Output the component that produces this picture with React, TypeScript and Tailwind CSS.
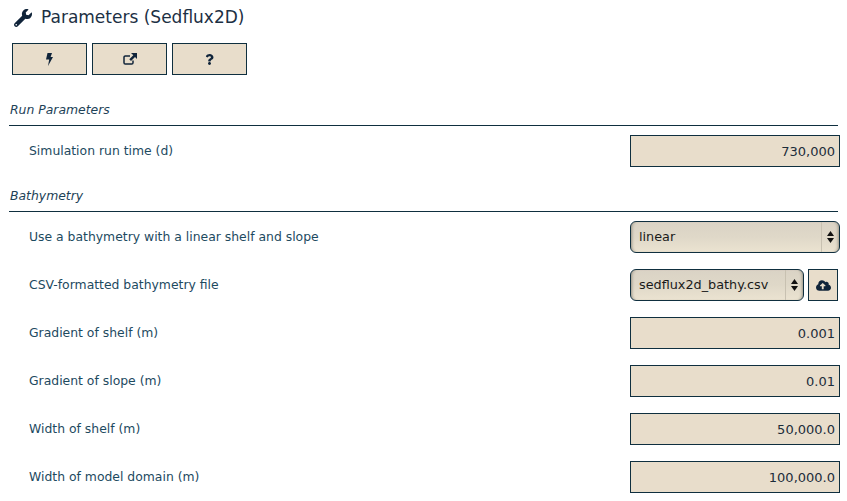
import { FaWrench, FaQuestion, FaCloudUploadAlt } from 'react-icons/fa';

const font = "[font-family:'DejaVu_Sans',sans-serif]";

function SectionHeading({ title }: { title: string }) {
  return (
    <div className="mx-[9px] mb-[9px] flex h-[31px] items-center border-b border-[#0f2f3f] pt-[1px] pl-px">
      <h2 className="text-[12.4px] italic text-[#1d4257]">{title}</h2>
    </div>
  );
}

function Row({ label, children }: { label: string; children: React.ReactNode }) {
  return (
    <div className="flex h-8 items-center justify-between pr-[7px] pl-[29px]">
      <label className="text-[12.4px] text-[#1d4a5f]">{label}</label>
      <div className="flex w-[210px] gap-[4px]">{children}</div>
    </div>
  );
}

function NumberInput({ value }: { value: string }) {
  return (
    <input
      readOnly
      value={value}
      className="h-8 w-full border border-[#0f2f3f] bg-[#e8ddcb] px-1 text-right text-[13px] text-[#1c2c3a] outline-none"
    />
  );
}

function SelectBox({ value, className }: { value: string; className: string }) {
  return (
    <div
      className={`flex h-8 items-center rounded-[6px] border border-[#0f2f3f] bg-gradient-to-b from-[#dad3c5] via-[#dfd8c8] to-[#ebe3d1] shadow-[inset_3px_0_3px_-2px_#9a9486,inset_-3px_0_3px_-2px_#9a9486] ${className}`}
    >
      <span className="flex-1 pl-2 text-[12.8px] text-[#1a1a1a]">{value}</span>
      <div className="flex h-full w-[18px] flex-col items-center justify-center gap-[2px] border-l border-[#c8c1b1]">
        <svg width="7" height="5" viewBox="0 0 7 5">
          <path d="M3.5 0 7 5H0z" fill="#111" />
        </svg>
        <svg width="7" height="5" viewBox="0 0 7 5">
          <path d="M0 0h7L3.5 5z" fill="#111" />
        </svg>
      </div>
    </div>
  );
}

function ToolButton({ children }: { children: React.ReactNode }) {
  return (
    <button className="flex h-8 w-[75px] items-center justify-center border border-[#0f2f3f] bg-[#e8ddcb] text-[#10243a]">
      {children}
    </button>
  );
}

export default function App() {
  return (
    <div className={`h-[501px] w-[847px] overflow-hidden bg-white ${font}`}>
      <header className="flex h-[43px] items-center gap-[9px] pb-[7px] pl-[14px]">
        <FaWrench className="text-[18px] text-[#10243a]" />
        <h1 className="text-[17px] text-[#1c3044]">Parameters (Sedflux2D)</h1>
      </header>
      <div className="mb-5 flex gap-[5px] pl-3">
        <ToolButton>
          <svg width="7" height="13" viewBox="0 0 7 13" fill="currentColor">
            <path d="M1.5 0H6L4.600 4H7L2 13l1.200-6.600H0z" />
          </svg>
        </ToolButton>
        <ToolButton>
          <svg width="14" height="12" viewBox="0 0 14 12" fill="none">
            <path
              d="M10 7.500v2.200a1.300 1.300 0 0 1-1.300 1.300H2.300A1.300 1.300 0 0 1 1 9.700V4.300A1.300 1.300 0 0 1 2.300 3H7"
              stroke="currentColor"
              strokeWidth="1.500"
            />
            <path d="M8 0h6v6l-2-2-4 4-1.700-1.700 4-4z" fill="currentColor" />
          </svg>
        </ToolButton>
        <ToolButton>
          <FaQuestion className="text-[11px]" />
        </ToolButton>
      </div>

      <SectionHeading title="Run Parameters" />
      <div className="mb-[14px] flex flex-col gap-4">
        <Row label="Simulation run time (d)">
          <NumberInput value="730,000" />
        </Row>
      </div>

      <SectionHeading title="Bathymetry" />
      <div className="flex flex-col gap-4">
        <Row label="Use a bathymetry with a linear shelf and slope">
          <SelectBox value="linear" className="w-full" />
        </Row>
        <Row label="CSV-formatted bathymetry file">
          <SelectBox value="sedflux2d_bathy.csv" className="w-[174px]" />
          <button className="flex h-8 w-[30px] items-center justify-center border border-[#0f2f3f] bg-[#e8ddcb] text-[#10243a]">
            <FaCloudUploadAlt className="text-[15px]" />
          </button>
        </Row>
        <Row label="Gradient of shelf (m)">
          <NumberInput value="0.001" />
        </Row>
        <Row label="Gradient of slope (m)">
          <NumberInput value="0.01" />
        </Row>
        <Row label="Width of shelf (m)">
          <NumberInput value="50,000.0" />
        </Row>
        <Row label="Width of model domain (m)">
          <NumberInput value="100,000.0" />
        </Row>
      </div>
    </div>
  );
}
